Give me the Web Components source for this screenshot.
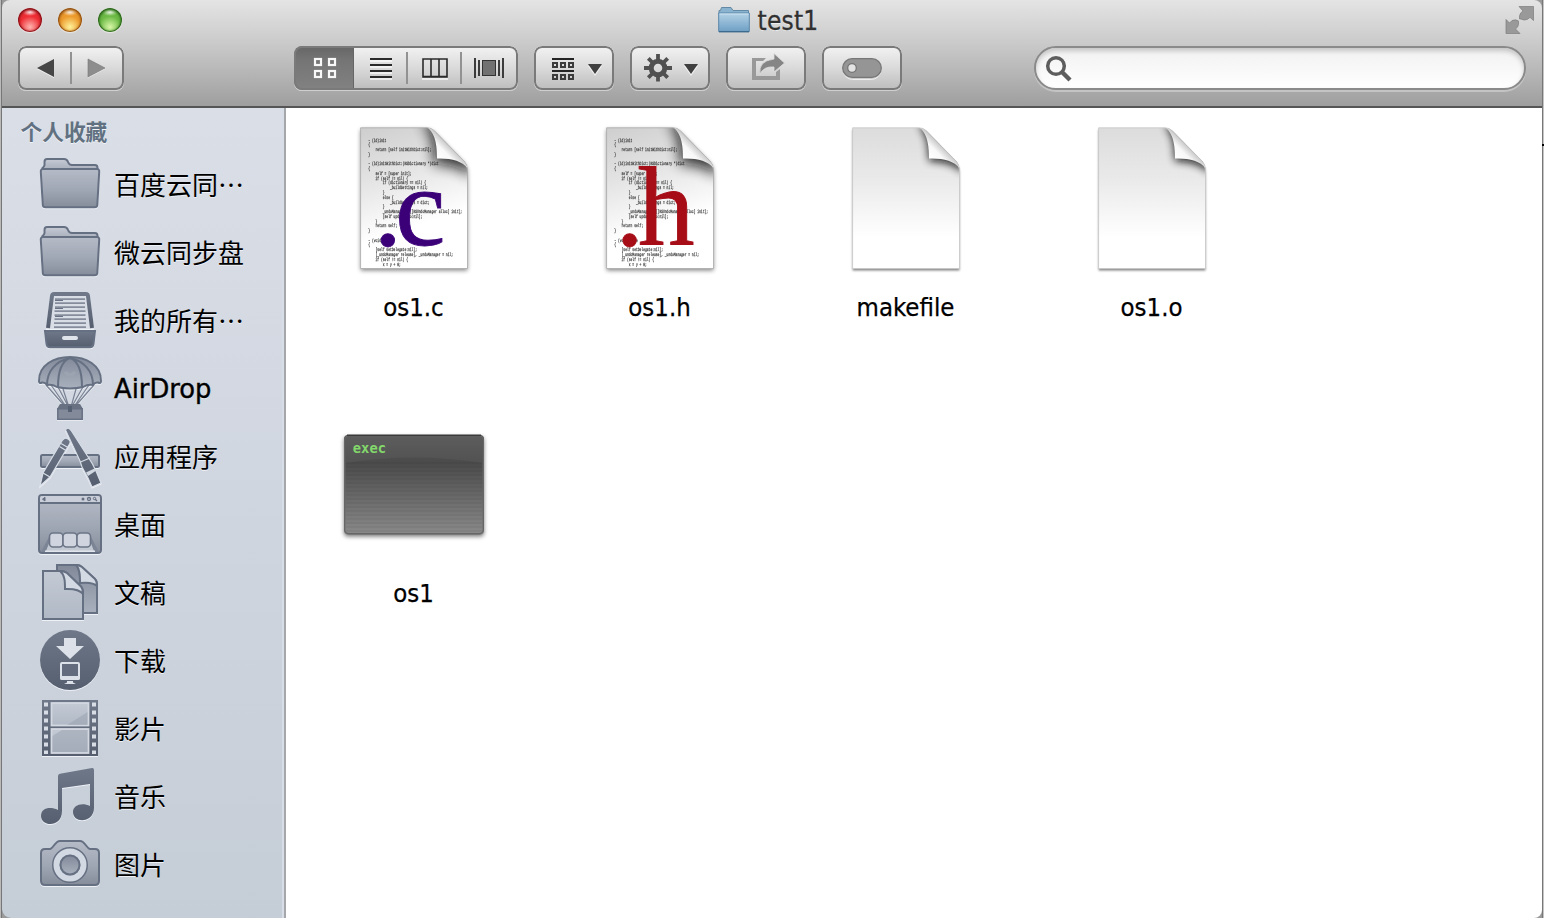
<!DOCTYPE html>
<html lang="zh-CN">
<head>
<meta charset="utf-8">
<title>test1</title>
<style>
html,body{margin:0;height:100%;overflow:hidden;background:#a6a6a6}
body{font-family:"DejaVu Sans Condensed","Noto Sans CJK SC",sans-serif;color:#000}
</style>
</head>
<body>
<finder-window></finder-window>
<script>
const define = (name, html) => customElements.define(name, class extends HTMLElement {
  connectedCallback() {
    if (this.shadowRoot) return;
    const root = this.attachShadow({ mode: 'open' });
    const t = document.createElement('template');
    t.innerHTML = typeof html === 'function' ? html(this) : html;
    root.append(t.content.cloneNode(true));
  }
});

/* Sidebar glyphs; each is drawn in a 64x68 box whose origin is (38, y). */
const sideIcons = {
  folder: [151, `
    <path class="o" fill="url(#tab)" d="M42.500 171V168Q44 167 44.500 165V162Q44.500 159 47 159H64Q67 159 68 162Q69 165 72 165H95Q97.500 165 97.500 168V171Z"/>
    <path class="o" fill="url(#g)" d="M43 169H97Q99.500 169 99.200 172L97.300 205Q97.100 207.300 94.500 207.300H45.500Q43 207.300 42.800 205L40.800 172Q40.600 169 43 169Z"/>`],
  allfiles: [287, `
    <path fill="#d9dee6" d="M50 296H90L94 329H46Z"/>
    <path fill="none" stroke="url(#d)" stroke-width="4" d="M48 328L52 296Q52.300 294 54 294H86Q87.700 294 88 296L92 328"/>
    <path stroke="#858d9d" stroke-width="1.700" d="M55 299.200H85M55 303.200H85M55 307.200H85M54.500 311.200H85.500M54.500 315.200H85.500M54.500 319.200H86M54 323.200H86M54 327.200H86"/>
    <path stroke="#697284" stroke-width="1.200" d="M55 300.500H63M55 308.500H63M55 316.500H63"/>
    <path class="o" fill="url(#d)" d="M45 331H95L93.500 344Q93 347.200 90 347.200H50Q47 347.200 46.500 344Z"/>
    <rect x="62" y="336" width="16" height="4" rx="2" fill="#dfe4eb"/>`],
  airdrop: [355, `
    <path fill="none" stroke="#7b8495" stroke-width="1.300" d="M46 385L69 411L51 385M58 387L69.500 409L63 389M76 389L70.500 409L83 387M89 385L71 411L94 385"/>
    <path class="o" stroke-width="1.700" fill="url(#p)" d="M39 381C38 349 102 349 101 381Q101 384 98 382.500Q95 382 93 385Q88 384 83 387Q70 390 57 387Q52 384 47 385Q45 382 42 382.500Q39 384 39 381Z"/>
    <path class="o" stroke-width="1.500" fill="none" d="M47 385C47 371 56 361 70 358C84 361 93 371 93 385M58 387C58 371 62 361 70 358C78 361 82 371 82 387"/>
    <path d="M65 372Q70 378 75 372" fill="none" stroke="#9ca4b2" stroke-width="3"/>
    <path fill="#687182" d="M60 404H80L83 409H57Z"/><rect x="57.800" y="408.800" width="24.400" height="10.500" fill="#838b9a" stroke="#667083" stroke-width="1.500"/><path fill="#566073" d="M68 406H72V412H68Z"/>`],
  apps: [423, `
    <rect class="o" x="41" y="455" width="58" height="12" rx="1.500" fill="url(#g)"/>
    <g stroke="#d7dde6" stroke-width="1.200">
    <path fill="url(#d)" d="M62.500 440Q65 437 68 439Q71.500 441 69.500 444L50 477L40 486L43 473Z"/>
    <path fill="none" d="M61 443.500L68 447.500M59.500 446.500L66 450.500M43 473L50 477"/>
    <path fill="url(#d)" d="M65.500 430Q68 426 71.500 431L90 460L92.500 464L96 471L101 483L92 487L88 478L82 467L80 461Z"/>
    <path fill="none" d="M80.500 462L90 458"/></g>
    <path fill="#d2d8e2" d="M86 472.500L94.500 468.500L95.500 471L88 476Z"/>`],
  desktop: [491, `
    <rect class="o" x="39" y="495" width="62" height="58" rx="3" fill="url(#g)"/>
    <path fill="#c9ced8" d="M40 498Q40 496 42 496H98Q100 496 100 498V502H40Z"/><path stroke="#667083" stroke-width="2" d="M40 503H100"/>
    <path d="M45 497.300V501L42.500 499.200Z" fill="#667083" stroke="#667083"/><circle cx="83" cy="499" r="1.500" fill="#667083"/><circle cx="89" cy="499" r="1.500" fill="none" stroke="#667083" stroke-width="1.300"/><path d="M95 499L97 501" stroke="#667083" stroke-width="1.300"/><circle cx="94.500" cy="498.500" r="1.200" fill="none" stroke="#667083"/>
    <path fill="#7c8595" d="M41 552L49 537H91L99 552Z"/><path fill="#c3c9d3" d="M46 551L50 541H90L94 551Z"/><path stroke="#e1e5ec" stroke-width="1.500" d="M45 551.300H95"/>
    <g fill="#cfd4de" stroke="#6c7587" stroke-width="1.600"><rect x="49.500" y="533" width="13.500" height="14" rx="3.500"/><rect x="63" y="533" width="14" height="14" rx="3.500"/><rect x="77" y="533" width="13.500" height="14" rx="3.500"/></g>`],
  docs: [559, `
    <path class="o" fill="url(#p)" d="M57 565H77Q80 565 82 567L95 579Q97 581 97 585V613H57Z"/>
    <path class="o" stroke-width="1.500" fill="#d4dae3" d="M76 565C80 569 80 576 80 583C89 582 94 583 97 586Q97 581 95 579L82 567Q79 565 76 565Z"/>
    <path class="o" fill="url(#l)" d="M43 571H61Q65 571 67 573L80.500 586Q83 588.500 83 593V619H43Z"/>
    <path class="o" stroke-width="1.500" fill="#d4dae3" d="M60 571C65 575 65 582 65 589C75 588.500 80 590 83 594Q83 588.500 80.500 586L67 573Q64 571 60 571Z"/>`],
  downloads: [627, `
    <circle cx="70" cy="660" r="30" fill="url(#d)"/>
    <path fill="#dce1e9" d="M64 638H76V646H84L70 659L56 646H64Z"/>
    <rect x="61" y="663" width="18" height="14" rx="1" fill="#626c7e" stroke="#dce1e9" stroke-width="2"/><path fill="#dce1e9" d="M60 676H80V678.500Q80 680 78 680H62Q60 680 60 678.500ZM67 681H73V682.500L76 684H64L67 682.500Z"/>`],
  movies: [695, `
    <rect x="42" y="700" width="56" height="56" fill="url(#d)"/>
    <path stroke="#d8dde5" stroke-width="4" stroke-dasharray="4 4" d="M46 702.500V754M94 702.500V754"/>
    <g fill="url(#l)" stroke="#d3d8e1" stroke-width="1.800"><rect x="51.500" y="703" width="37" height="22.500"/><rect x="51.500" y="729" width="37" height="24"/></g>
    <path fill="#969eae" opacity=".48" d="M87.500 712L67 725H87.500ZM62 730H87.500V752H52.500V736Z"/>`],
  music: [763, `<path fill="url(#d)" d="M58 776Q58 774 60 773.700L92 768Q94 767.700 94 770V808C94 823 73 824 73 812C73 805 82 802 90 806V784L62 788V811C62 828 41 827 41 816C41 808 50 806 58 810Z"/>`],
  pictures: [831, `
    <path class="o" fill="url(#g)" d="M41 853Q41 849 45 849H50C53 849 55 841 60 841H80C85 841 87 849 90 849H95Q99 849 99 853V881Q99 885 95 885H45Q41 885 41 881Z"/>
    <circle cx="70" cy="865" r="14.500" fill="none" stroke="#667083" stroke-width="7"/><circle cx="70" cy="865" r="13.500" fill="none" stroke="#d3d9e2" stroke-width="6"/><circle class="o" cx="70" cy="865" r="9.500" fill="url(#p)"/>`]
};

define('side-icon', el => {
  const [y, art] = sideIcons[el.getAttribute('name')];
  return `<style>:host{display:block;width:64px;height:68px}svg{display:block;overflow:visible;filter:drop-shadow(0 1px 0 #edf0f5)}.o{stroke:#667083;stroke-width:2}</style>
  <svg width="64" height="68" viewBox="38 ${y} 64 68"><defs>
  <linearGradient id="g" x2="0" y2="1"><stop stop-color="#b5bbc7"/><stop offset=".55" stop-color="#a0a7b4"/><stop offset="1" stop-color="#858d9b"/></linearGradient>
  <linearGradient id="tab" x2="0" y2="1"><stop stop-color="#c5cad4"/><stop offset="1" stop-color="#a6adb9"/></linearGradient>
  <linearGradient id="d" x2="0" y2="1"><stop stop-color="#6e7889"/><stop offset="1" stop-color="#555f70"/></linearGradient>
  <linearGradient id="p" x2="0" y2="1"><stop stop-color="#828a9a"/><stop offset="1" stop-color="#a9b0bd"/></linearGradient>
  <linearGradient id="l" x2="0" y2="1"><stop stop-color="#c3cad4"/><stop offset="1" stop-color="#b1b9c6"/></linearGradient>
  </defs>${art}</svg>`;
});

define('side-item', el => `<style>
  :host{display:flex;align-items:center;height:68px;padding-left:36px;gap:12px;font-family:"Noto Sans CJK SC",sans-serif;font-size:26px;line-height:36px;text-shadow:0 1px 0 #eef1f6}
  .t{white-space:nowrap;padding-bottom:3px}
  :host([latin]) .t{font-family:"DejaVu Sans",sans-serif;font-size:25.800px;padding-bottom:0;-webkit-text-stroke:.4px #000}
  </style><side-icon name="${el.getAttribute('icon')}"></side-icon><span class="t"><slot></slot></span>`);

define('side-bar', `<style>
  :host{display:block;box-sizing:border-box;width:284px;border-right:2px solid #a5a7aa;box-shadow:inset -2px 0 #d8dee8;background:linear-gradient(#dadee7,#c5cdd7);border-bottom-left-radius:9px}
  h2{margin:0;height:43px;padding-left:18.500px;font:700 21.700px/45px "Noto Sans CJK SC",sans-serif;color:#617181;text-shadow:0 1px 0 #f2f4f8}
  </style><h2>个人收藏</h2>
  <side-item icon="folder">百度云同…</side-item><side-item icon="folder">微云同步盘</side-item><side-item icon="allfiles">我的所有…</side-item>
  <side-item icon="airdrop" latin>AirDrop</side-item><side-item icon="apps">应用程序</side-item><side-item icon="desktop">桌面</side-item>
  <side-item icon="docs">文稿</side-item><side-item icon="downloads">下载</side-item><side-item icon="movies">影片</side-item>
  <side-item icon="music">音乐</side-item><side-item icon="pictures">图片</side-item>`);

define('window-light', `<style>
  :host{display:block;width:24px;height:24px;border-radius:50%;background:
   radial-gradient(ellipse 8px 4px at 50% 4px,#fffffff0,#ffffff30 75%,transparent),
   radial-gradient(circle 11px at 50% 19px,var(--glow),transparent),var(--c);
   box-shadow:inset 0 1px 3px 1px var(--edge),inset 0 0 1px 1px var(--edge),0 1px 1px #ffffff80}
  </style>`);

define('title-bar', `<style>
  :host{display:grid;grid-template-columns:1fr auto 1fr;align-items:center;height:40px;padding:0 8px 0 16px}
  .l{display:flex;gap:16px}.t{display:flex;align-items:center;gap:8px;margin-right:16px;font-size:26px;line-height:38px;color:#303030;text-shadow:0 1px 0 #ffffffa0}
  .t span{letter-spacing:.2px;padding-top:2px;-webkit-text-stroke:.3px #303030}svg{display:block}.f{justify-self:end}
  </style>
  <div class="l"><window-light style="--c:#ee2e34;--glow:#ffb4b0;--edge:#8c1218"></window-light><window-light style="--c:#ec9a2c;--glow:#fff29a;--edge:#945212"></window-light><window-light style="--c:#6cba45;--glow:#d8f7a8;--edge:#2b661b"></window-light></div>
  <div class="t"><svg width="32" height="28" viewBox="0 0 32 28"><defs><linearGradient id="a" x2="0" y2="1"><stop stop-color="#b3d2e6"/><stop offset="1" stop-color="#6e9fc4"/></linearGradient></defs>
   <path d="M1 9V4.500H2.500L3.500 1.500H13L15 4.500H30.500V9Z" fill="#8ab3cf" stroke="#6289a5"/><path d="M.7 7H31.300V25.500H.7Z" fill="url(#a)" stroke="#5a86a8"/><path d="M1 25.700H31" stroke="#3e6a8d" stroke-width="1.400"/><path d="M1.500 8H30.500" stroke="#cce2ef"/></svg><span>test1</span></div>
  <svg class="f" width="30" height="30" viewBox="1504 6 30 30"><g fill="#999" stroke="#7d7d7d" stroke-width=".7"><path d="M1519 7.500H1533.500V21.500L1530 18.300L1527.500 20.300Q1524 22 1521 20L1519.500 20V17Q1520 13.500 1523 12Z"/><path d="M1506 20.500L1509.500 24L1512 21.500Q1516 20 1518.500 22V25.500Q1518 28.500 1515.500 30L1520 34.500H1506Z"/></g></svg>`);

/* A bezelled toolbar button; the slotted drawing covers the whole button. */
define('tool-button', `<style>
  :host{display:block;flex:none;height:44px;border-radius:8px;overflow:hidden;background:linear-gradient(#f3f3f3,#dadada 50%,#bcbcbc);position:relative;filter:drop-shadow(0 1px 0 #ffffff70)}
  :host::after{content:"";position:absolute;inset:0;border:2px solid #7a7a7a;border-radius:8px}
  ::slotted(svg){display:block}
  </style><slot></slot>`);

define('search-field', `<style>
  :host{display:flex;align-items:center;box-sizing:border-box;width:492px;height:44px;border:2px solid #8a8a8a;border-radius:22px;padding-left:9px;background:linear-gradient(#f1f1f1,#fff);box-shadow:inset 0 3px 5px #00000030,0 2px 0 #ffffff50}
  </style><svg width="28" height="28" viewBox="0 0 28 28"><circle cx="11" cy="12" r="8.300" fill="none" stroke="#5d5d5d" stroke-width="3.500"/><path d="M17 18L25 26" stroke="#5d5d5d" stroke-width="4.500"/></svg>`);

const sq = (x, y, s, w) => `<rect x="${x}" y="${y}" width="${s}" height="${s}" stroke-width="${w}"/>`;
define('tool-bar', `<style>
  :host{display:flex;padding:0 16px;height:60px}
  .v{margin-left:170px}.g{margin-left:16px}search-field{margin-left:auto}
  </style>
  <tool-button><svg width="106" height="44" viewBox="18 46 106 44"><path fill="#ffffffb0" d="M54 61V78L37 69ZM88 61L105 69L88 78Z"/><path fill="#464646" d="M54 59V77L37 68Z"/><path fill="#8d8d8d" stroke="#777" stroke-width=".6" d="M88 59L105 68L88 77Z"/><path stroke="#929292" stroke-width="2" d="M71 52V84"/></svg></tool-button>
  <tool-button class="v"><svg width="224" height="44" viewBox="294 46 224 44"><defs><linearGradient id="s" x2="0" y2="1"><stop stop-color="#656565"/><stop offset=".3" stop-color="#747474"/><stop offset="1" stop-color="#828282"/></linearGradient></defs>
    <path fill="url(#s)" d="M294 46H354V90H294Z"/><path stroke="#666" d="M353.500 46V90"/>
    <g fill="none" stroke="#f8f8f8">${sq(315,59,6,2.200)}${sq(329,59,6,2.200)}${sq(315,71,6,2.200)}${sq(329,71,6,2.200)}</g>
    <path stroke="#929292" stroke-width="2" d="M407 52V84M461 52V84"/>
    <g stroke="#ffffffa0" stroke-width="2"><path d="M370 61H392M370 67H392M370 73H392M370 79H392M422 79H448"/></g>
    <path stroke="#2b2b2b" stroke-width="2" d="M370 59H392M370 65H392M370 71H392M370 77H392"/>
    <path fill="none" stroke="#2b2b2b" stroke-width="1.600" d="M423 59H447V77H423ZM431 59V77M439 59V77M423 76.500H447"/>
    <path stroke="#2b2b2b" stroke-width="1.800" d="M475 58V78M479 60V76M499 60V76M503 58V78"/><rect x="482.500" y="60.500" width="13" height="15" fill="#717171" stroke="#333"/></svg></tool-button>
  <tool-button class="g"><svg width="80" height="44" viewBox="534 46 80 44"><path stroke="#252525" stroke-width="2" d="M552 59H574M552 71H574"/><g fill="none" stroke="#3b3b3b">${[553,561,569].map(x=>sq(x,63,4,2)+sq(x,75,4,2)).join('')}</g><path fill="#fff" opacity=".65" d="M588 66H602L595 76Z"/><path fill="#404040" d="M588 64H602L595 74Z"/></svg></tool-button>
  <tool-button class="g"><svg width="80" height="44" viewBox="630 46 80 44"><g fill="none" stroke="#505050"><circle cx="658" cy="68" r="6.800" stroke-width="5"/><path stroke-width="3.800" d="M658 54V60M658 76V81.500M644 68H650M666 68H672M648.300 58.300L652 62M664 74L667.700 77.700M648.300 77.700L652 74M664 62L667.700 58.300"/></g><path fill="#fff" opacity=".65" d="M684 66H698L691 76Z"/><path fill="#404040" d="M684 64H698L691 74Z"/></svg></tool-button>
  <tool-button class="g"><svg width="80" height="44" viewBox="726 46 80 44"><path fill="#999" d="M752 58H766L763 61H756V76H776V72L780 69V80H752Z"/><path fill="#858585" stroke="#dedede" stroke-width=".8" d="M774 53.500L784.500 63L774 72V67Q764 66 760 74Q758 61 774 59Z"/></svg></tool-button>
  <tool-button class="g"><svg width="80" height="44" viewBox="822 46 80 44"><rect x="843" y="60" width="38" height="19.500" rx="9.700" fill="none" stroke="#eee"/><rect x="842.700" y="58.700" width="38.600" height="18.600" rx="9.300" fill="#959595" stroke="#777" stroke-width="1.300"/><circle cx="852" cy="68" r="4.300" fill="#e3e3e3" stroke="#757575" stroke-width="1.300"/></svg></tool-button>
  <search-field></search-field>`);

const code = ['- (id)init','{','    return [self initWithDict:nil];','}','','- (id)initWithDict:(NSDictionary *)dict','{','    self = [super init];','    if (self != nil) {','        if (dictionary == nil) {','            _buildSettings = nil;','        }','        else {','            _buildSettings = dict;','        }','        _undoManager = [[NSUndoManager alloc] init];','        [self updateUndo:nil];','    }','    return self;','}','','- (void)close','{','    [self setDelegate:nil];','    [_undoManager release], _undoManager = nil;','    if (self != nil) {','        x = y + 8;'];
const page = 'M18.600 .8H85Q89 .8 92 3.500L120 32Q125.500 37 125.500 43V141.500H18.600Z';
const sheet = kind => {
  const src = kind !== 'blank';
  const listing = src ? `<g transform="scale(.62 1)" text-rendering="geometricPrecision" font-family="Liberation Mono,monospace" font-size="4.850" fill="#222" stroke="#222" stroke-width=".25" opacity=".85">${code.map((s,i)=>s?`<text xml:space="preserve" x="42.500" y="${(14.500+i*4.770).toFixed(1)}">${s}</text>`:'').join('')}</g>` : '';
  const badge = kind === 'c' ? '<text x="31.800 53.300" y="117.500" fill="#3b0078" stroke="#3b0078">.c</text>' : kind === 'h' ? '<text x="27.400 50" y="117.500" fill="#a60d17" stroke="#a60d17">.h</text>' : '';
  return `<defs><linearGradient id="b" x2="${src?'.25':'0'}" y2="1"><stop stop-color="${src?'#cecece':'#dcdcdc'}"/><stop offset=".35" stop-color="${src?'#e2e2e2':'#e9e9e9'}"/><stop offset=".78" stop-color="#fff"/></linearGradient>
   <linearGradient id="k" gradientUnits="userSpaceOnUse" x1="95" y1="31" x2="109" y2="17"><stop stop-color="#fff"/><stop offset=".5" stop-color="#f8f8f8"/><stop offset="1" stop-color="#b8b8b8"/></linearGradient>
   <clipPath id="cp"><path d="${page}"/></clipPath><filter id="bl" x="-50%" y="-50%" width="200%" height="200%"><feGaussianBlur stdDeviation="${src?7:4.500}"/></filter></defs>
   <path d="${page}" fill="url(#b)" style="filter:drop-shadow(0 2px ${src?2:1}px #0000007a)"/>
   <g clip-path="url(#cp)"><path d="${src?'M80 -6C92 8 92 20 92 37C110 37 122 42 130 50V-6Z':'M85 -2C94 8 95 20 95 34C112 34 122 38 130 46V-4Z'}" fill="#111" opacity="${src?.85:.9}" filter="url(#bl)"/>
   ${listing}</g>
   <path d="${page}" fill="none" stroke="${src?'#aaa':'#c8c8c8'}" stroke-width=".8"/>
   <path d="M86 .8C94 8 95 20 95 31.500C109 31 120 34 125.400 41Q124.500 36 120 32L92 3.500Q89 .8 86 .8Z" fill="url(#k)"/>
   <g font-family="Liberation Serif,serif" font-size="113" stroke-width=".9">${badge}</g>`;
};
const exec = `<defs><linearGradient id="e" x2="0" y2="1"><stop stop-color="#565656"/><stop offset=".28" stop-color="#4b4b4b"/><stop offset="1" stop-color="#8a8a8a"/></linearGradient>
   <pattern id="st" width="8" height="4" patternUnits="userSpaceOnUse"><path fill="#000" opacity=".045" d="M0 0H8V2H0Z"/></pattern></defs>
   <rect x="2" y="21" width="140" height="99.500" rx="4" fill="url(#e)" style="filter:drop-shadow(0 2px 2px #0008)"/>
   <rect x="4" y="48" width="136" height="70" fill="url(#st)"/><path fill="#fff" opacity=".045" d="M4 23H140V49Q72 38 4 49Z"/>
   <rect x="2.700" y="21.700" width="138.600" height="98" rx="4" fill="none" stroke="#666" stroke-width="1.400"/><path d="M5 21.300H139" stroke="#3a3a3a" stroke-width="1.400"/>
   <text x="10.800" y="38.600" font-family="DejaVu Sans Mono,monospace" font-weight="700" font-size="13.800" fill="#83d86c">exec</text>`;

define('file-icon', el => {
  const kind = el.getAttribute('kind');
  return `<style>:host{display:block;width:144px;height:144px}svg{display:block;overflow:visible}</style><svg width="144" height="144" viewBox="0 ${kind==='exec'?-1:0} 144 144">${kind === 'exec' ? exec : sheet(kind)}</svg>`;
});
define('file-item', el => `<style>
  :host{display:flex;flex-direction:column;align-items:center;gap:17px;font-size:25.500px;line-height:38px;-webkit-text-stroke:.25px #000}
  file-icon{-webkit-text-stroke:0}span{margin-right:1px}
  </style><file-icon kind="${el.getAttribute('kind')}"></file-icon><span><slot></slot></span>`);
define('file-grid', `<style>
  :host{display:grid;grid-template-columns:repeat(5,246px);grid-auto-rows:286px;align-content:start;flex:1;min-width:0;padding:19px 0 0 5px;background:#fff;box-sizing:border-box}
  .n{grid-column:1}
  </style><file-item kind="c">os1.c</file-item><file-item kind="h">os1.h</file-item><file-item kind="blank">makefile</file-item><file-item kind="blank">os1.o</file-item><file-item class="n" kind="exec">os1</file-item>`);

define('finder-window', `<style>
  :host{display:block;position:relative;box-sizing:border-box;width:1544px;height:918px;padding:0 2px;background:linear-gradient(90deg,#bababa 0 1px,#777 1px 2px,#999 2px 1542px,#777 1542px 1543px,#c5c5c5 1543px)}
  header{box-sizing:border-box;display:grid;grid-template-rows:40px 60px;row-gap:6px;height:108px;border-bottom:2px solid #555;border-radius:8px 8px 0 0;background:linear-gradient(#e4e4e4,#cecece 35%,#b5b5b5 70%,#9e9e9e)}
  main{display:flex;height:810px;border-radius:0 0 8px 8px;overflow:hidden}
  i{position:absolute;right:0;top:144px;width:2px;height:2px;background:#000}
  </style><header><title-bar></title-bar><tool-bar></tool-bar></header><main><side-bar></side-bar><file-grid></file-grid></main><i></i>`);
</script>
</body>
</html>
